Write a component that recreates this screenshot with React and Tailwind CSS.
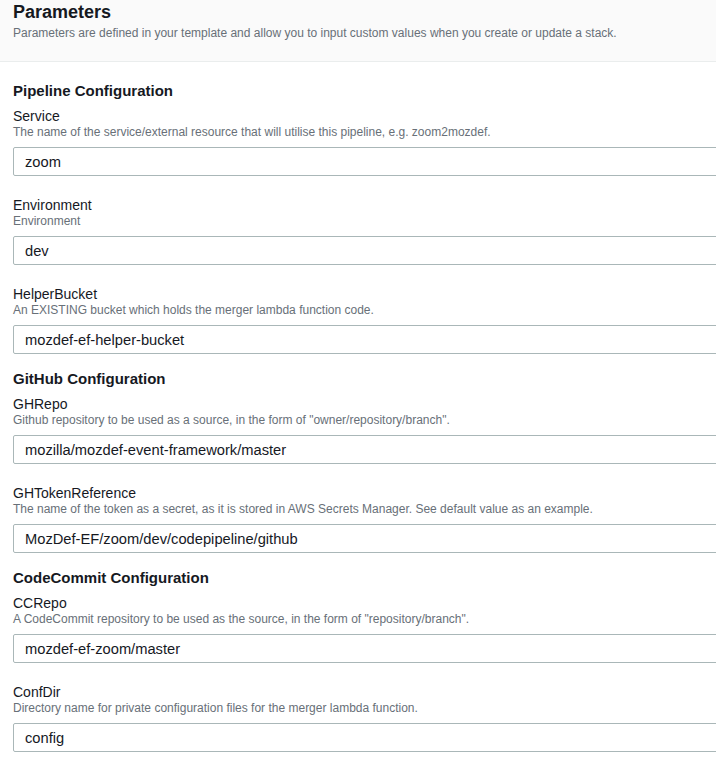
import React from "react";

const sections = [
  {
    title: "Pipeline Configuration",
    fields: [
      {
        label: "Service",
        description:
          "The name of the service/external resource that will utilise this pipeline, e.g. zoom2mozdef.",
        value: "zoom",
      },
      {
        label: "Environment",
        description: "Environment",
        value: "dev",
      },
      {
        label: "HelperBucket",
        description: "An EXISTING bucket which holds the merger lambda function code.",
        value: "mozdef-ef-helper-bucket",
      },
    ],
  },
  {
    title: "GitHub Configuration",
    fields: [
      {
        label: "GHRepo",
        description:
          'Github repository to be used as a source, in the form of "owner/repository/branch".',
        value: "mozilla/mozdef-event-framework/master",
      },
      {
        label: "GHTokenReference",
        description:
          "The name of the token as a secret, as it is stored in AWS Secrets Manager. See default value as an example.",
        value: "MozDef-EF/zoom/dev/codepipeline/github",
      },
    ],
  },
  {
    title: "CodeCommit Configuration",
    fields: [
      {
        label: "CCRepo",
        description:
          'A CodeCommit repository to be used as the source, in the form of "repository/branch".',
        value: "mozdef-ef-zoom/master",
      },
      {
        label: "ConfDir",
        description:
          "Directory name for private configuration files for the merger lambda function.",
        value: "config",
      },
    ],
  },
];

const Field = ({ label, description, value }) => (
  <div className="mb-[20px]">
    <p className="text-[14px] leading-[18px] text-[#16191f]">{label}</p>
    <p className="text-[12px] leading-[15px] text-[#687078]">{description}</p>
    <input
      readOnly
      value={value}
      className="mt-[7px] block h-[29px] w-[calc(100%+20px)] rounded-[2px] border border-[#aab7b8] bg-white px-[11px] text-[14.7px] text-[#16191f] outline-none"
    />
  </div>
);

const App = () => {
  return (
    <div
      className="min-h-screen w-full overflow-hidden bg-white"
      style={{ fontFamily: '"Liberation Sans", Arial, sans-serif' }}
    >
      {/* ================= HEADER ================= */}
      <div className="h-[62px] border-b border-[#eaeded] bg-[#fafafa] px-[13px] pt-[1px]">
        <h1 className="text-[18px] font-bold leading-[22px] text-[#16191f]">
          Parameters
        </h1>
        <p className="mt-[2px] text-[12px] leading-[16px] text-[#687078]">
          Parameters are defined in your template and allow you to input custom
          values when you create or update a stack.
        </p>
      </div>

      {/* ================= SECTIONS ================= */}
      <main className="pl-[13px] pt-[19px]">
        {sections.map((section, i) => (
          <section key={section.title} className={i > 0 ? "-mt-[5px]" : ""}>
            <h2 className="mb-[6px] text-[15px] font-bold leading-[20px] text-[#16191f]">
              {section.title}
            </h2>
            {section.fields.map((field) => (
              <Field key={field.label} {...field} />
            ))}
          </section>
        ))}
      </main>
    </div>
  );
};

export default App;
